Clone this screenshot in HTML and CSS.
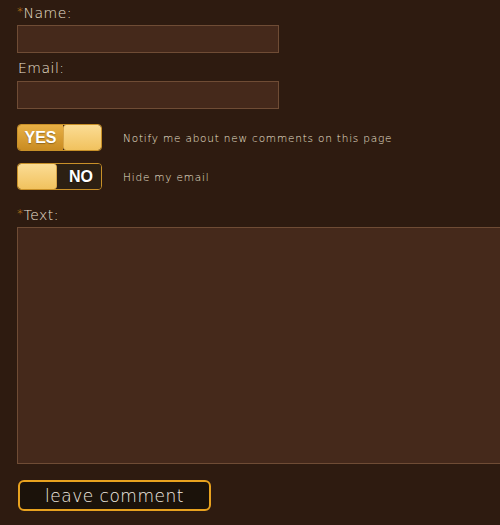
FILE: index.html
```html
<!DOCTYPE html>
<html lang="en">
<head>
  <meta charset="UTF-8">
  <title>Leave a comment</title>
  <link rel="stylesheet" href="styles.css">
</head>
<body>
  <form class="comment-form">
    <label class="field-label"><span class="req">*</span>Name:</label>
    <input class="field-input" type="text">

    <label class="field-label email-label">Email:</label>
    <input class="field-input" type="text">

    <!-- yes/no switches -->
    <div class="switch-row first">
      <div class="switch on">
        <span class="switch-text">YES</span>
        <span class="switch-knob"></span>
      </div>
      <span class="switch-label">Notify me about new comments on this page</span>
    </div>
    <div class="switch-row">
      <div class="switch off">
        <span class="switch-knob"></span>
        <span class="switch-text">NO</span>
      </div>
      <span class="switch-label">Hide my email</span>
    </div>

    <label class="field-label text-label"><span class="req">*</span>Text:</label>
    <textarea class="field-text"></textarea>

    <button class="submit" type="button">leave comment</button>
  </form>
</body>
</html>
```

FILE: styles.css
```css
/* Basic styling */
body {
  margin: 0;
  background: #2e1b10;
  font-family: "DejaVu Sans", sans-serif;
  font-weight: 200;
  color: #ede2d2;
  overflow: hidden;
}
.comment-form {
  display: flex;
  flex-direction: column;
  align-items: flex-start;
  padding: 2px 0 0 17px;
}
.field-label {
  font-size: 14px;
  letter-spacing: 0.5px;
  line-height: 20px;
  height: 20px;
}
.req {
  color: #eaa21e;
  font-size: 12px;
  vertical-align: 2px;
}
.email-label {
  margin-top: 5px;
  padding-left: 1px;
}
.field-input {
  box-sizing: border-box;
  width: 262px;
  height: 28px;
  margin: 3px 0 0;
  background: #45291b;
  border: 1px solid #6f4c35;
  outline: none;
}
/* Switches */
.switch-row {
  display: flex;
  align-items: center;
  margin-top: 12px;
}
.switch-row.first {
  margin-top: 15px;
}
.switch {
  box-sizing: border-box;
  display: flex;
  width: 85px;
  height: 27px;
  border-radius: 4px;
  overflow: hidden;
  border: 1px solid #c89028;
}
.switch-text {
  font-family: "Liberation Sans", Arial, sans-serif;
  font-weight: bold;
  font-size: 16px;
  color: #fff;
  line-height: 25px;
  text-shadow: 0 1px 1px rgba(0,0,0,0.3);
}
.switch.on .switch-text {
  width: 45px;
  text-align: center;
  background: linear-gradient(#e8b045, #c98b22);
}
.switch.off .switch-text {
  flex: 1;
  text-align: center;
  padding-left: 4px;
  background: #2c2013;
}
.switch-knob {
  flex: 1;
  border-radius: 3px;
  background: linear-gradient(#fbdc94, #f1c25e);
  border-left: 1px solid #d9a649;
}
.switch.off .switch-knob {
  flex: none;
  width: 38px;
  border-left: none;
  border-right: 1px solid #d9a649;
}
.switch-label {
  margin-left: 21px;
  font-size: 10.5px;
  letter-spacing: 0.8px;
}
.text-label {
  margin-top: 14px;
}
.field-text {
  box-sizing: border-box;
  width: 500px;
  height: 237px;
  margin: 3px 0 0;
  background: #45291b;
  border: 1px solid #6f4c35;
  outline: none;
  resize: none;
}
/* Submit button */
.submit {
  box-sizing: border-box;
  width: 193px;
  height: 31px;
  margin: 16px 0 0 1px;
  background: #1b120a;
  border: 2px solid #e8a21f;
  border-radius: 6px;
  color: #f4ede2;
  font-family: "DejaVu Sans", sans-serif;
  font-weight: 200;
  font-size: 17px;
  letter-spacing: 0.5px;
  padding: 0;
}
```
